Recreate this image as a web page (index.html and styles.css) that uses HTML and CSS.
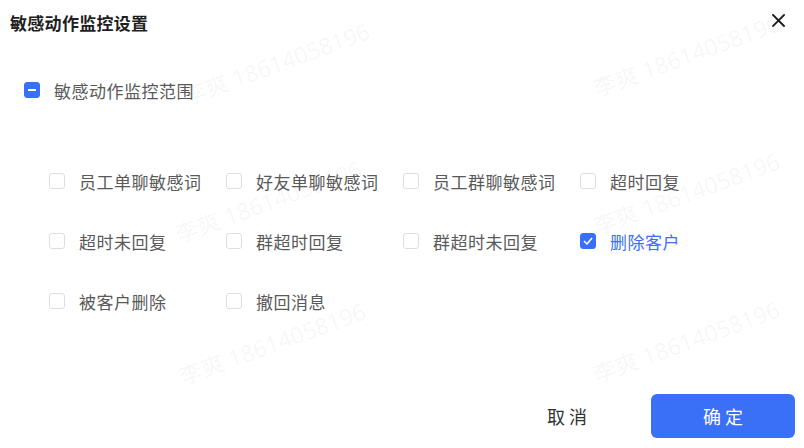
FILE: index.html
```html
<!DOCTYPE html>
<html lang="zh-CN">
<head>
  <meta charset="UTF-8" />
  <title>敏感动作监控设置</title>
  <link rel="stylesheet" href="styles.css">
</head>
<body>
  <div class="dialog">
    <!-- Header -->
    <div class="dialog-header">
      <div class="dialog-title">敏感动作监控设置</div>
      <button class="close-btn" aria-label="关闭">
        <svg width="13" height="13" viewBox="0 0 13 13"><path d="M1 1 L12 12 M12 1 L1 12" stroke="#1a1a1a" stroke-width="1.8" stroke-linecap="square"/></svg>
      </button>
    </div>

    <!-- Scope -->
    <label class="check scope">
      <span class="box indeterminate"></span>
      <span class="check-label">敏感动作监控范围</span>
    </label>

    <!-- Options -->
    <div class="options">
      <label class="check"><span class="box"></span><span class="check-label">员工单聊敏感词</span></label>
      <label class="check"><span class="box"></span><span class="check-label">好友单聊敏感词</span></label>
      <label class="check"><span class="box"></span><span class="check-label">员工群聊敏感词</span></label>
      <label class="check"><span class="box"></span><span class="check-label">超时回复</span></label>
      <label class="check"><span class="box"></span><span class="check-label">超时未回复</span></label>
      <label class="check"><span class="box"></span><span class="check-label">群超时回复</span></label>
      <label class="check"><span class="box"></span><span class="check-label">群超时未回复</span></label>
      <label class="check checked"><span class="box"><svg width="10" height="8" viewBox="0 0 10 8"><path d="M1 4 L4 7 L9 1" fill="none" stroke="#fff" stroke-width="1.5"/></svg></span><span class="check-label">删除客户</span></label>
      <label class="check"><span class="box"></span><span class="check-label">被客户删除</span></label>
      <label class="check"><span class="box"></span><span class="check-label">撤回消息</span></label>
    </div>

    <!-- Footer -->
    <div class="dialog-footer">
      <button class="btn btn-cancel">取消</button>
      <button class="btn btn-primary">确定</button>
    </div>
  </div>

  <!-- Watermark layer -->
  <div class="watermark">
    <span class="wm" style="left:184px;top:86px">李爽 18614058196</span>
    <span class="wm" style="left:594px;top:78px">李爽 18614058196</span>
    <span class="wm" style="left:176px;top:224px">李爽 18614058196</span>
    <span class="wm" style="left:594px;top:216px">李爽 18614058196</span>
    <span class="wm" style="left:180px;top:366px">李爽 18614058196</span>
    <span class="wm" style="left:594px;top:364px">李爽 18614058196</span>
  </div>
</body>
</html>
```

FILE: styles.css
```css
:root {
  --primary: #3a6ff8;
  --text: #595959;
  --title: #1f1f1f;
  --border: #dcdee3;
}
* {
  margin: 0;
  padding: 0;
  box-sizing: border-box;
}
html, body {
  height: 100%;
}
body {
  background: #fff;
  font-family: "Noto Sans CJK SC", "Noto Sans", sans-serif;
  color: var(--text);
  overflow: hidden;
  position: relative;
}
.dialog {
  height: 448px;
  display: flex;
  flex-direction: column;
}
/* Header */
.dialog-header {
  height: 44px;
  padding: 0 19px 0 10px;
  display: flex;
  align-items: center;
  justify-content: space-between;
}
.dialog-title {
  font-size: 17px;
  letter-spacing: 0.3px;
  font-weight: 700;
  color: var(--title);
}
.close-btn {
  border: none;
  background: none;
  display: flex;
  cursor: pointer;
  margin-top: -4px;
}
/* Checkbox */
.check {
  display: flex;
  align-items: center;
  gap: 14px;
  height: 24px;
  cursor: pointer;
}
.box {
  width: 16px;
  height: 16px;
  border: 1px solid var(--border);
  border-radius: 3px;
  background: #fff;
  display: flex;
  align-items: center;
  justify-content: center;
  flex-shrink: 0;
}
.box.indeterminate {
  background: var(--primary);
  border-color: var(--primary);
}
.box.indeterminate::after {
  content: "";
  width: 8px;
  height: 2px;
  background: #fff;
}
.checked .box {
  background: var(--primary);
  border-color: var(--primary);
}
.check-label {
  font-size: 17px;
  letter-spacing: 0.5px;
  white-space: nowrap;
}
.checked .check-label {
  color: var(--primary);
}
.scope {
  margin-top: 34px;
  padding-left: 24px;
}
/* Options grid */
.options {
  margin-top: 67px;
  padding-left: 49px;
  display: grid;
  grid-template-columns: repeat(4, 177px);
  row-gap: 36px;
}
/* Footer */
.dialog-footer {
  margin-top: auto;
  padding: 0 9px 10px 0;
  display: flex;
  justify-content: flex-end;
  gap: 12px;
}
.btn {
  width: 144px;
  height: 44px;
  border: none;
  border-radius: 6px;
  font-family: inherit;
  font-size: 18px;
  letter-spacing: 4px;
  text-indent: 4px;
  cursor: pointer;
}
.btn-cancel {
  background: #fff;
  color: #333;
}
.btn-primary {
  background: var(--primary);
  color: #fff;
}
/* Watermark */
.watermark {
  position: absolute;
  inset: 0;
  pointer-events: none;
}
.wm {
  position: absolute;
  font-size: 23px;
  line-height: 1;
  color: rgba(0, 0, 0, 0.05);
  white-space: nowrap;
  transform: rotate(-20deg);
  transform-origin: left center;
  font-family: "Open Sans", "Noto Sans CJK SC", sans-serif;
}
```
